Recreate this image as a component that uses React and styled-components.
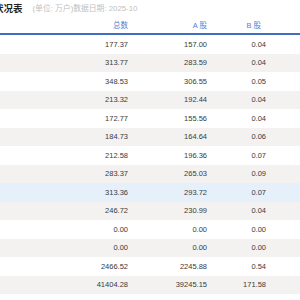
import React from "react";
import styled, { createGlobalStyle } from "styled-components";

const Global = createGlobalStyle`
  html, body { margin: 0; padding: 0; background: #fff; }
  body { width: 300px; height: 300px; overflow: hidden;
    font-family: "Liberation Sans", "Noto Sans CJK SC", sans-serif; }
`;

const Page = styled.div`
  width: 300px;
  overflow: hidden;
`;

const TitleBar = styled.div`
  display: flex;
  align-items: center;
  gap: 10px;
  height: 15px;
  margin-left: -6px;
`;

const Title = styled.span`
  font-size: 9.5px;
  font-weight: 700;
  color: #222;
  white-space: nowrap;
`;

const Sub = styled.span`
  font-size: 7.8px;
  color: #c0c0c0;
  white-space: nowrap;
`;

const Grid = styled.div`
  display: grid;
  grid-template-columns: 128px 79px 59px 34px;
`;

const HeadRow = styled(Grid)`
  height: 18px;
  border-bottom: 2px solid #3f6ec3;
  align-items: center;
`;

const HeadCell = styled.div`
  text-align: right;
  font-size: 7.5px;
  color: #5580d2;
  padding-right: ${(p) => p.$pr || 0}px;
`;

const Row = styled(Grid)`
  height: 18.5px;
  align-items: center;
  background: ${(p) =>
    p.$tone === "hover" ? "#e5f0fa" : p.$tone === "odd" ? "#f3f2f1" : "#fff"};
`;

const Cell = styled.div`
  text-align: right;
  font-size: 7.5px;
  color: #3a3a3a;
`;

const rows = [
  ["177.37", "157.00", "0.04"],
  ["313.77", "283.59", "0.04"],
  ["348.53", "306.55", "0.05"],
  ["213.32", "192.44", "0.04"],
  ["172.77", "155.56", "0.04"],
  ["184.73", "164.64", "0.06"],
  ["212.58", "196.36", "0.07"],
  ["283.37", "265.03", "0.09"],
  ["313.36", "293.72", "0.07"],
  ["246.72", "230.99", "0.04"],
  ["0.00", "0.00", "0.00"],
  ["0.00", "0.00", "0.00"],
  ["2466.52", "2245.88", "0.54"],
  ["41404.28", "39245.15", "171.58"],
];

export default function App() {
  return (
    <Page>
      <Global />
      <TitleBar>
        <Title>状况表</Title>
        <Sub>(单位: 万户)数据日期: 2025-10</Sub>
      </TitleBar>
      <HeadRow>
        <HeadCell>总数</HeadCell>
        <HeadCell>A 股</HeadCell>
        <HeadCell $pr={5}>B 股</HeadCell>
        <div />
      </HeadRow>
      {rows.map((r, i) => (
        <Row key={i} $tone={i === 8 ? "hover" : i % 2 ? "odd" : "even"}>
          <Cell>{r[0]}</Cell>
          <Cell>{r[1]}</Cell>
          <Cell>{r[2]}</Cell>
          <div />
        </Row>
      ))}
    </Page>
  );
}
